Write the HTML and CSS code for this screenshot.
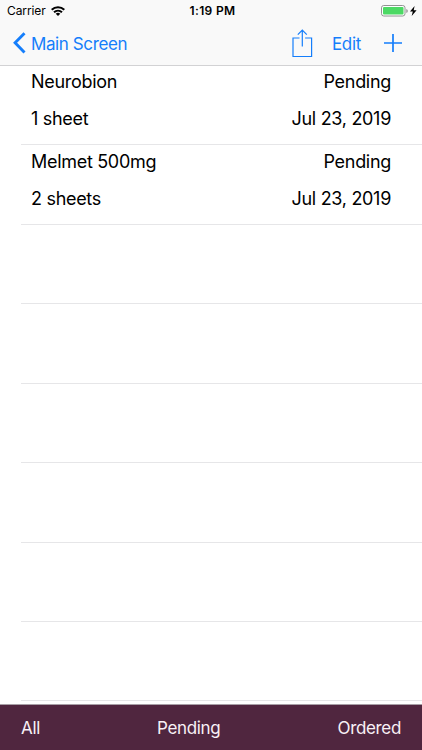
FILE: index.html
```html
<!DOCTYPE html>
<html lang="en">
<head>
<meta charset="utf-8">
<title>Orders</title>
<link rel="stylesheet" href="styles.css">
</head>
<body>
<div class="screen">
  <header>
    <div class="status">
      <div class="carrier"><span>Carrier</span>
        <svg width="14" height="10" viewBox="0 0 14 10" fill="none" stroke="#000" stroke-width="2"><path d="M.7 3.8C4.2.4 9.8.4 13.3 3.8M3 6.2c2.3-2.1 5.700-2.100 8 0"/><path d="M7 9.900 4.700 7.700q2.300-1.800 4.600 0Z" fill="#000" stroke="none"/></svg>
      </div>
      <div class="time">1:19 PM</div>
      <div class="power">
        <svg width="28" height="12" viewBox="0 0 28 12"><rect x=".5" y=".5" width="23.500" height="10.500" rx="2.300" fill="#fff" stroke="#929292"/><rect x="2" y="2" width="20.500" height="7.500" rx="1" fill="#4cd964"/><path d="M25.300 4v4q1.500-.6 1.500-2T25.300 4Z" fill="#929292"/></svg>
        <svg width="7" height="10" viewBox="0 0 7 10"><path d="M4.600 0 0 5.600h2.800L1.700 10 6.600 4.200H3.700Z"/></svg>
      </div>
    </div>
    <nav class="nav">
      <a class="back"><svg width="13" height="22" viewBox="0 0 13 22" fill="none" stroke="#157efb" stroke-width="2.900"><path d="M11.500 1.200 2.100 10.800l9.400 9.700"/></svg><span class="label">Main Screen</span></a>
      <svg class="share" width="21" height="29" viewBox="0 0 21 29" fill="none" stroke="#157efb" stroke-width="1.200"><path d="M7.500 9H1v18.500h18.600V9h-6.500M10.300 17.500V1.300M5.800 5.600l4.500-4.500 4.500 4.500"/></svg>
      <a class="edit label">Edit</a>
      <svg class="plus" width="18" height="18" viewBox="0 0 18 18" stroke="#157efb" stroke-width="1.700"><path d="M9 0v18M0 9h18"/></svg>
    </nav>
  </header>
  <main>
    <div class="row first">
      <div class="line"><span class="name">Neurobion</span><span class="state">Pending</span></div>
      <div class="line"><span class="qty">1 sheet</span><span class="date">Jul 23, 2019</span></div>
    </div>
    <div class="row">
      <div class="line"><span class="name">Melmet 500mg</span><span class="state">Pending</span></div>
      <div class="line"><span class="qty">2 sheets</span><span class="date">Jul 23, 2019</span></div>
    </div>
    <div class="row"></div>
    <div class="row"></div>
    <div class="row"></div>
    <div class="row"></div>
    <div class="row"></div>
    <div class="row"></div>
  </main>
  <footer><span class="all">All</span><span class="pending">Pending</span><span class="ordered">Ordered</span></footer>
</div>
</body>
</html>
```
FILE: styles.css
```css
* { box-sizing: border-box; }
body { margin: 0; background: #fff; color: #000; font: 18px/24px Inter, "Liberation Sans", sans-serif; }
.screen { width: 422px; height: 750px; display: flex; flex-direction: column; overflow: hidden; }
svg { display: block; flex: none; }
span, a, .time { white-space: nowrap; }
header { height: 66px; flex: none; background: #f9f9f9; border-bottom: 1px solid #d2d2d4; }
.status { height: 22px; display: grid; grid-template-columns: 1fr auto 1fr; align-items: center; font-size: 12px; line-height: 22px; padding: 0 5px 0 7px; }
.carrier { display: flex; align-items: center; gap: 5px; letter-spacing: -.1px; }
.time { font-weight: 600; letter-spacing: .35px; padding-left: 1px; }
.power { display: flex; align-items: center; justify-content: flex-end; gap: 1px; }
.nav { height: 42px; display: flex; align-items: center; color: #157efb; font-size: 17px; padding: 0 20px 0 13px; }
.label { padding-top: 2px; }
.back { display: flex; align-items: center; gap: 5px; margin-right: auto; letter-spacing: -.4px; }
.share { margin-right: 19px; }
.edit { margin-right: 23px; letter-spacing: -.3px; }
main { height: 638px; flex: none; overflow: hidden; }
.row { height: 79.430px; margin-left: 21px; padding: 5px 31px 0 10px; border-bottom: 1px solid #e6e6e8; }
.first { padding-top: 4px; }
.line { height: 37px; display: flex; justify-content: space-between; letter-spacing: -.3px; }
footer { height: 46px; flex: none; border-top: 1px solid #a89fa6; background: #50263f; color: #f8f1f6; display: grid; grid-template-columns: 136px 1fr auto; align-items: center; padding: 0 21px; font-size: 17px; letter-spacing: -.35px; }
```
